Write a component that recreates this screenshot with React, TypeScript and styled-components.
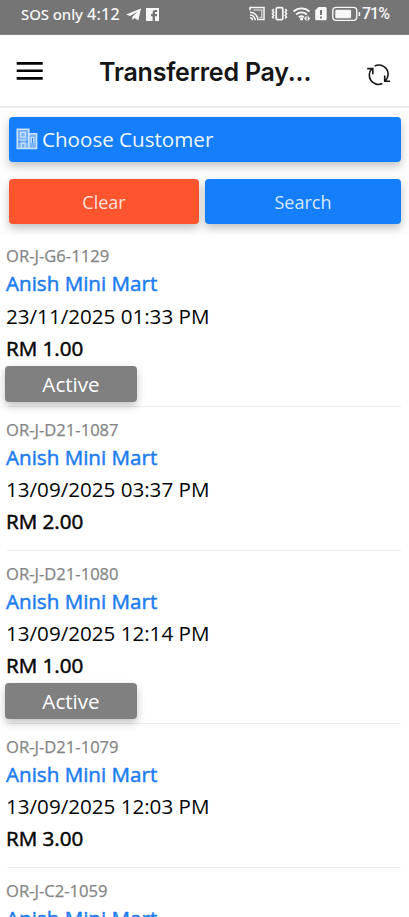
import React from "react";
import styled, { createGlobalStyle, css } from "styled-components";

const Global = createGlobalStyle`
  * { box-sizing: border-box; }
  html, body { margin: 0; background: #fff; overflow: hidden; }
  body { font-family: "Open Sans", "Noto Sans", sans-serif; color: #000; }
  button { font-family: inherit; border: 0; padding: 0; cursor: pointer; }
`;

const Screen = styled.div`
  width: 100%;
  height: 917px;
  overflow: hidden;
  background: #fff;
`;

const StatusBar = styled.div`
  height: 35px;
  padding: 0 19px 6px 21px;
  display: flex;
  align-items: center;
  justify-content: space-between;
  background: #757575;
  border-bottom: 1px solid #8a8a8a;
  color: #f7f7f7;
  svg { display: block; flex: none; }
`;

const StatusGroup = styled.div`
  display: flex;
  align-items: center;
`;

const Carrier = styled.span`
  width: 66px;
  font: 500 15px/20px "Noto Sans", sans-serif;
  letter-spacing: -0.1px;
  white-space: nowrap;
`;

const Clock = styled.span`
  width: 39px;
  font: 500 16px/20px "Noto Sans", sans-serif;
  letter-spacing: 0.3px;
  white-space: nowrap;
`;

const Percent = styled.span`
  width: 28px;
  font: 500 16px/20px Roboto, sans-serif;
  letter-spacing: -1px;
  white-space: nowrap;
`;

const Header = styled.header`
  height: 73px;
  display: flex;
  align-items: center;
  padding: 0 18px 0 16px;
  background: #fff;
  border-bottom: 2px solid #ececec;
`;

const IconButton = styled.button<{ $drop?: number }>`
  display: flex;
  padding-top: ${(p) => p.$drop ?? 0}px;
  background: none;
`;

const Title = styled.h1`
  flex: 1;
  margin: 2px 0 0 55px;
  font: 600 25px/36px Inter, sans-serif;
  letter-spacing: -0.2px;
  color: #151515;
  white-space: nowrap;
`;

const Filters = styled.section`
  display: grid;
  grid-template-columns: 190px 196px;
  column-gap: 6px;
  row-gap: 17px;
  padding: 9px 8px 10px 9px;
  background: #fdfdfd;
`;

const raised = css`
  border-radius: 4px;
  box-shadow: 0 4px 8px rgba(0, 0, 0, 0.24);
`;

const Chooser = styled.button`
  ${raised}
  grid-column: 1 / -1;
  height: 45px;
  display: flex;
  align-items: center;
  padding: 0 7px 1px;
  gap: 4px;
  background: #147efb;
  color: #eef6ff;
  font-size: 20.6px;
`;

const Action = styled.button<{ $color: string }>`
  ${raised}
  height: 45px;
  background: ${(p) => p.$color};
  color: rgba(255, 255, 255, 0.84);
  font-size: 18px;
`;

const Line = styled.div<{ $size: number; $height: number; $color?: string; $stroke?: number }>`
  font-size: ${(p) => p.$size}px;
  line-height: ${(p) => p.$height}px;
  color: ${(p) => p.$color ?? "#050505"};
  -webkit-text-stroke: ${(p) => p.$stroke ?? 0}px currentColor;
  white-space: nowrap;
`;

const Badge = styled.div`
  ${raised}
  width: 132px;
  height: 36px;
  margin: 1px 0 0 -1px;
  background: #808080;
  color: #fff;
  font-size: 20.6px;
  line-height: 36px;
  text-align: center;
`;

const Item = styled.li<{ $active?: boolean }>`
  height: ${(p) => (p.$active ? 173 : 144)}px;
  padding: 11px 0 0 6px;
  display: flex;
  flex-direction: column;
  align-items: flex-start;
  background: linear-gradient(#ececec, #ececec) 7px 100% / 394px 1px no-repeat;

  &:first-child {
    padding-top: 10px;
    > :nth-child(3) { line-height: 34px; }
    > :nth-child(4) { line-height: 31px; }
    ${Badge} { margin-top: 2px; }
  }
`;

const List = styled.ul`
  margin: 0;
  padding: 0;
  list-style: none;
`;

const payments = [
  { code: "OR-J-G6-1129", date: "23/11/2025 01:33 PM", amount: "RM 1.00", active: true },
  { code: "OR-J-D21-1087", date: "13/09/2025 03:37 PM", amount: "RM 2.00" },
  { code: "OR-J-D21-1080", date: "13/09/2025 12:14 PM", amount: "RM 1.00", active: true },
  { code: "OR-J-D21-1079", date: "13/09/2025 12:03 PM", amount: "RM 3.00" },
  { code: "OR-J-C2-1059" },
];

const TelegramIcon = () => (
  <svg width="15" height="13" viewBox="0 0 15 13">
    <path fill="#f7f7f7" d="M15 .5 0 6.5l4 1.4 7.3-4.2-5 5v3.3l2.2-2 3.8 2.5z" />
  </svg>
);

const FacebookShape = styled.svg`
  margin-left: 5px;
`;

const FacebookIcon = () => (
  <FacebookShape width="13" height="13" viewBox="0 0 13 13">
    <path fill="#f7f7f7" fillRule="evenodd" d="M0 0h13v13H9V8.2h2V6.1H9V5c0-.7.3-1 1-1h1.1V2H9.4C7.5 2 6.6 3 6.6 4.6v1.5H5v2.1h1.6V13H0z" />
  </FacebookShape>
);

const SystemIcons = () => (
  <svg width="113" height="16" viewBox="0 0 113 16" fill="none" stroke="#f7f7f7">
    <g strokeWidth="1.5">
      <path d="M1 4.2V1.6h14v12H9.8" />
      <path d="M1 6.2a8 8 0 0 1 8 8M1 9a5.2 5.2 0 0 1 5.2 5.2M1 11.7a2.5 2.5 0 0 1 2.5 2.5" />
      <path d="M4.5 4h8.2v7.5h-2.2" opacity=".65" />
    </g>
    <rect x="27.2" y="1.7" width="6.6" height="12" rx="1.3" strokeWidth="1.7" />
    <path strokeWidth="1.5" d="m24.8 3-1.4 1.6 1.4 1.6-1.4 1.6 1.4 1.6-1.4 1.6 1.4 1.6M36.2 3l1.4 1.6-1.4 1.6 1.4 1.6-1.4 1.6 1.4 1.6-1.4 1.6" />
    <g strokeWidth="1.9">
      <path d="M44.5 5.5c4.5-4.2 11.5-4.2 16 0M47.2 8.5c3-2.8 7.6-2.8 10.6 0M49.8 11.2c1.6-1.3 3.5-1.3 5 0" />
    </g>
    <circle cx="52.6" cy="13" r="1.6" fill="#f7f7f7" stroke="none" />
    <path fill="#f7f7f7" stroke="none" d="m57.5 9.6-2.4 2.8 2.4 2.8zm1.2 0 2.4 2.8-2.4 2.8z" />
    <path fill="#f7f7f7" stroke="none" d="M69.5 1H76c1 0 1.7.7 1.7 1.7v10c0 1-.7 1.6-1.7 1.6h-8.2c-1 0-1.6-.6-1.6-1.6V4.3z" />
    <path stroke="#686868" strokeWidth="1.8" d="M72 4v5M72 10.6v1.8" />
    <rect x="83.8" y="1.4" width="24" height="13" rx="3.4" strokeWidth="1.4" />
    <rect x="86.3" y="3.8" width="15.8" height="8.4" rx="1.2" fill="#f7f7f7" stroke="none" />
    <path strokeWidth="1.6" d="M110.4 6v4" />
  </svg>
);

const MenuIcon = () => (
  <svg width="28" height="20" viewBox="0 0 28 20">
    <path stroke="#050505" strokeWidth="2.6" d="M.7 2.4h26M.7 9.8h26M.7 17.4h26" />
  </svg>
);

const RefreshIcon = () => (
  <svg width="24" height="22" viewBox="0 0 24 22" fill="none" stroke="#151515" strokeWidth="1.6">
    <path d="M15.3 19.6A9.2 9.2 0 0 1 4.9 4.8M.2 4.6h5.6v5.6" />
    <path d="M7.7 2A9.2 9.2 0 0 1 18.3 16.8M23 17.2h-5.3v-5.6" />
  </svg>
);

const BuildingIcon = () => (
  <svg width="22" height="22" viewBox="0 0 22 22" fill="none" stroke="#cbe3ff" strokeWidth="1.5">
    <path fill="#79b4fb" d="M1.2 1.2h11.6v19.3H1.2zM12.8 5.8h7.8v14.7h-7.8z" />
    <rect x="4.7" y="4.5" width="4.6" height="4.6" strokeWidth="1.2" />
    <path strokeWidth="1.2" d="M3.5 12h7M5.3 20v-4.7h3.8V20M15.2 15V9.5h2.6V15" />
    <path stroke="#2c83ed" strokeWidth="1" d="M2.6 13.6h2M9.8 13.6h2M16.5 10v4.5" />
  </svg>
);

export default function App() {
  return (
    <Screen>
      <Global />
      <StatusBar>
        <StatusGroup>
          <Carrier>SOS only</Carrier>
          <Clock>4:12</Clock>
          <TelegramIcon />
          <FacebookIcon />
        </StatusGroup>
        <StatusGroup>
          <SystemIcons />
          <Percent>71%</Percent>
        </StatusGroup>
      </StatusBar>
      <Header>
        <IconButton aria-label="Menu"><MenuIcon /></IconButton>
        <Title>Transferred Pay...</Title>
        <IconButton aria-label="Refresh" $drop={8}><RefreshIcon /></IconButton>
      </Header>
      <Filters>
        <Chooser><BuildingIcon />Choose Customer</Chooser>
        <Action $color="#ff552e">Clear</Action>
        <Action $color="#147efb">Search</Action>
      </Filters>
      <List>
        {payments.map((p) => (
          <Item key={p.code} $active={p.active}>
            <Line $size={16.6} $height={24} $color="#858585" $stroke={0.25}>{p.code}</Line>
            <Line $size={20.6} $height={31} $color="#1c7df0" $stroke={0.5}>Anish Mini Mart</Line>
            {p.date && <Line $size={20.6} $height={32}>{p.date}</Line>}
            {p.amount && <Line $size={20.6} $height={33} $stroke={0.5}>{p.amount}</Line>}
            {p.active && <Badge>Active</Badge>}
          </Item>
        ))}
      </List>
    </Screen>
  );
}
